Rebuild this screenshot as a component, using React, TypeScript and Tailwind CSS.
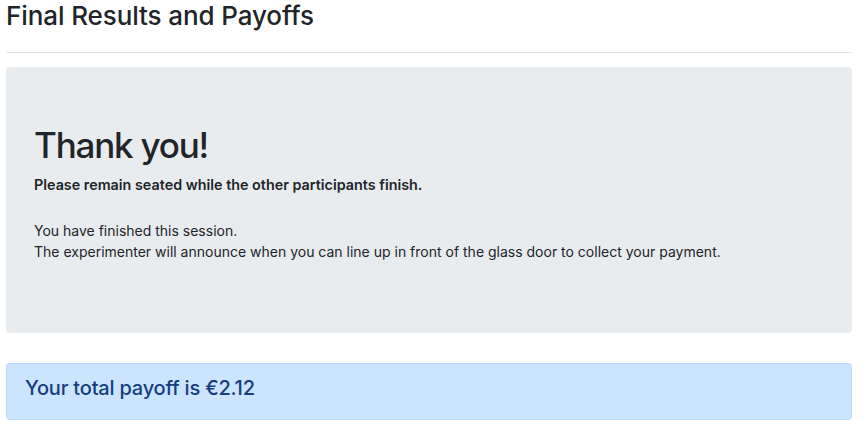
export default function App() {
  return (
    <div className="w-[866px] h-[430px] bg-white text-[#212529] overflow-hidden" style={{ fontFamily: 'Inter, "Noto Sans", sans-serif' }}>
      <div className="ml-[6px] w-[846px]">
        <h2 className="text-[26px] leading-[31px] font-medium tracking-[-0.1px]">Final Results and Payoffs</h2>
        <hr className="mt-[21px] mb-[14px] border-t border-[rgba(0,0,0,0.1)]" />
        <div className="bg-[#e9ecef] rounded-[4px] px-[28px] pt-[57px] pb-[57px] mb-[30px]">
          <h1 className="text-[35px] leading-[42px] font-medium mb-[8px] tracking-[-1.2px]">Thank you!</h1>
          <p className="text-[14.35px] leading-[21px] font-semibold mb-[25px]">Please remain seated while the other participants finish.</p>
          <p className="text-[14px] leading-[21px] mb-[14px]">
            You have finished this session.
            <br />
            The experimenter will announce when you can line up in front of the glass door to collect your payment.
          </p>
        </div>
        <div className="bg-[#cce5ff] border border-[#b8daff] rounded-[4px] px-[18px] pt-[11.5px] pb-[11.5px]">
          <h4 className="text-[20px] leading-[25px] font-medium mb-[7px] text-[#173d7e] tracking-[-0.2px]">Your total payoff is €2.12</h4>
        </div>
      </div>
    </div>
  );
}
